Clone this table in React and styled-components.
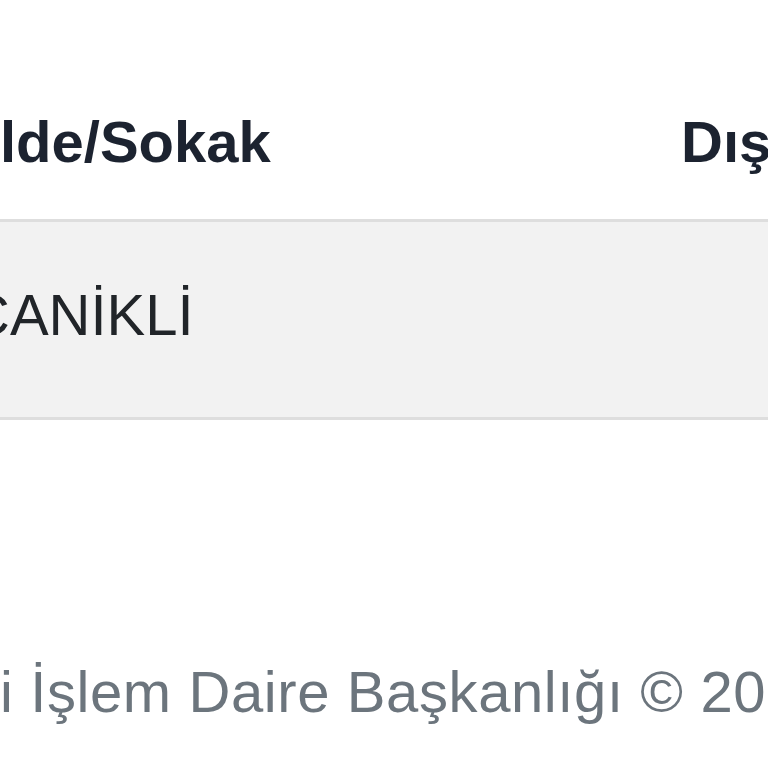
import styled, { createGlobalStyle } from 'styled-components';

const Global = createGlobalStyle`
  html, body { margin: 0; padding: 0; background: #fff; }
  body {
    width: 768px;
    height: 768px;
    overflow: hidden;
    font-family: "Liberation Sans", Arial, sans-serif;
    color: #212529;
  }
`;

const Page = styled.div`
  width: 768px;
  height: 768px;
  overflow: hidden;
  display: flex;
  flex-direction: column;
`;

const Table = styled.div`
  margin-top: 98px;
  display: grid;
  grid-template-columns: 681px 1fr;
  width: 1100px;
`;

const HeadCell = styled.div`
  font-size: 58px;
  font-weight: 700;
  line-height: 87px;
  padding: 0 0 34px;
  white-space: nowrap;
  border-bottom: 3px solid #dedede;
  color: #1c2330;
`;

const Cell = styled.div`
  font-size: 58px;
  line-height: 87px;
  padding: 49px 0 59px;
  white-space: nowrap;
  background: #f2f2f2;
  border-bottom: 3px solid #dedede;
  color: #212529;
  text-indent: ${({ $indent }) => $indent || 0}px;
`;

const Footer = styled.footer`
  margin-top: 228px;
  font-size: 58px;
  line-height: 87px;
  letter-spacing: 0.6px;
  color: #6c757d;
  white-space: nowrap;
`;

export default function App() {
  return (
    <Page>
      <Global />
      <Table>
        <HeadCell>lde/Sokak</HeadCell>
        <HeadCell>Dış Kapı No</HeadCell>
        <Cell $indent={-32}>CANİKLİ</Cell>
        <Cell />
      </Table>
      <Footer>i İşlem Daire Başkanlığı © 2024</Footer>
    </Page>
  );
}
